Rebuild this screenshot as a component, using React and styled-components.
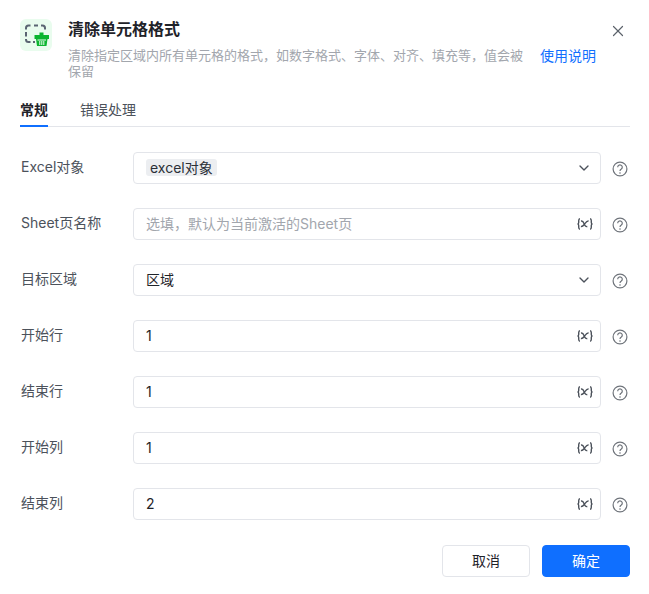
import React from "react";
import styled, { createGlobalStyle } from "styled-components";
import { ChevronDown, X } from "lucide-react";

const GlobalStyle = createGlobalStyle`
  body {
    margin: 0;
    background: #fff;
    font-family: "Inter", "Noto Sans CJK SC", sans-serif;
  }
`;

const Dialog = styled.div`
  width: 649px;
  height: 594px;
  box-sizing: border-box;
  padding: 19px 19px 0 20px;
`;

const Header = styled.div`
  display: flex;
  height: 62px;
`;

const IconBox = styled.div`
  width: 32px;
  height: 32px;
  flex: none;
  margin-right: 16px;
`;

const HeadText = styled.div`
  width: 472px;
  flex: none;
  padding-right: 12px;
  box-sizing: border-box;
`;

const Title = styled.div`
  font-size: 16px;
  font-weight: 700;
  line-height: 20px;
  color: #1f2329;
`;

const Desc = styled.div`
  margin-top: 8px;
  font-size: 13px;
  line-height: 16px;
  color: #a2a6ad;
`;

const HelpLink = styled.a`
  margin-top: 29px;
  font-size: 14px;
  line-height: 16px;
  color: #0f6fff;
  white-space: nowrap;
`;

const CloseButton = styled.button`
  margin: 3px 0 0 13px;
  padding: 0;
  height: 18px;
  border: none;
  background: none;
  color: #5c626b;
  display: flex;
`;

const Tabs = styled.div`
  display: flex;
  gap: 32px;
  width: 610px;
  height: 46px;
  box-sizing: border-box;
  border-bottom: 1px solid #e3e5ea;
`;

const Tab = styled.div`
  font-size: 14px;
  line-height: 20px;
  padding-top: 19px;
  height: 46px;
  box-sizing: border-box;
  font-weight: ${(p) => (p.$active ? 700 : 400)};
  color: ${(p) => (p.$active ? "#1f2329" : "#4c525b")};
  border-bottom: ${(p) => (p.$active ? "2px solid #0f6fff" : "none")};
`;

const Form = styled.div`
  display: flex;
  flex-direction: column;
  gap: 24px;
  margin-top: 25px;
`;

const Row = styled.div`
  display: flex;
  align-items: flex-start;
`;

const Label = styled.div`
  width: 112px;
  margin-left: 1px;
  flex: none;
  font-size: 14px;
  line-height: 30px;
  color: #4c525b;
`;

const Field = styled.div`
  width: 468px;
  height: 32px;
  box-sizing: border-box;
  display: flex;
  align-items: center;
  justify-content: space-between;
  padding: 0 7px 0 12px;
  border: 1px solid #e3e5ea;
  border-radius: 4px;
  font-size: 14px;
  color: #1f2329;
`;

const FieldText = styled.span`
  margin-top: -2px;
  color: ${(p) => (p.$muted ? "#a2a6ad" : "#1f2329")};
`;

const Tag = styled.span`
  background: #eceef1;
  border-radius: 3px;
  padding: 0 4px;
  line-height: 18px;
  color: #2b3038;
`;

const Chevron = styled(ChevronDown)`
  color: #4c525b;
  margin-right: 1px;
`;

const Help = styled.svg`
  width: 16px;
  height: 16px;
  margin: 9px 0 0 11px;
  flex: none;
`;

const Footer = styled.div`
  display: flex;
  justify-content: flex-end;
  gap: 12px;
  width: 610px;
  margin-top: 25px;
`;

const Button = styled.button`
  width: 88px;
  height: 32px;
  padding: 0 0 2px;
  border-radius: 4px;
  font-family: inherit;
  font-size: 14px;
  border: 1px solid ${(p) => (p.$primary ? "#0f6fff" : "#e3e5ea")};
  background: ${(p) => (p.$primary ? "#0f6fff" : "#fff")};
  color: ${(p) => (p.$primary ? "#fff" : "#1f2329")};
`;

const LogoIcon = () => (
  <svg width="32" height="32" viewBox="0 0 32 32">
    <rect width="32" height="32" rx="6" fill="#e9fcee" />
    <path d="M6 10.500V9A2.500 2.500 0 0 1 8.500 6.500H10.500M14 6.500h4M21 6.500h1.500A2.500 2.500 0 0 1 25 9V10.500M6 13v4.500M6 20v.5A2.500 2.500 0 0 0 8.500 23H10.500M13 23h2" fill="none" stroke="#5a6472" strokeWidth="2" />
    <path d="M19.500 13.500h4v2.500h5.500v4H14.500v-4h5z" fill="#0bb52f" />
    <path d="M16 20h11.500l-1 7H17z" fill="#0bb52f" />
    <path d="M17.500 21h8.500" stroke="#e9fcee" strokeWidth="1" />
    <path d="M19.800 22v4M21.800 22v4M23.800 22v4" stroke="#e9fcee" strokeWidth="1" />
  </svg>
);

const VarIcon = () => (
  <svg width="16" height="12" viewBox="0 0 16 12" fill="none" stroke="#4c525b" strokeWidth="1.400">
    <path d="M3 .8c-1.300 0-1.300.8-1.300 2v1.700c0 .9-.4 1.500-1.200 1.500.8 0 1.200.6 1.200 1.500v1.700c0 1.200 0 2 1.300 2" />
    <path d="M13 .8c1.300 0 1.300.8 1.300 2v1.700c0 .9.4 1.500 1.200 1.500-.8 0-1.200.6-1.200 1.500v1.700c0 1.200 0 2-1.300 2" />
    <path d="M4 3c1.600-.3 2.300.4 3 2.600.8 2.200 1.600 3.400 3.300 2.900M11.600 3.100c-1.600-.4-3.200 1.900-4 2.900-.8 1-1.800 2.900-3.700 2.500" />
  </svg>
);

const HelpIcon = () => (
  <Help viewBox="0 0 16 16">
    <circle cx="8" cy="8" r="6.900" fill="none" stroke="#6f747b" strokeWidth="1.200" />
    <path d="M5.700 6.200a2.300 2.300 0 1 1 3.600 1.900c-.8.5-1.300 1-1.300 2" fill="none" stroke="#6f747b" strokeWidth="1.200" />
    <circle cx="8" cy="12" r=".8" fill="#6f747b" />
  </Help>
);

const rows = [
  { label: "Excel对象", tag: "excel对象", select: true },
  { label: "Sheet页名称", placeholder: "选填，默认为当前激活的Sheet页" },
  { label: "目标区域", value: "区域", select: true },
  { label: "开始行", value: "1" },
  { label: "结束行", value: "1" },
  { label: "开始列", value: "1" },
  { label: "结束列", value: "2" },
];

export default function App() {
  return (
    <Dialog>
      <GlobalStyle />
      <Header>
        <IconBox>
          <LogoIcon />
        </IconBox>
        <HeadText>
          <Title>清除单元格格式</Title>
          <Desc>清除指定区域内所有单元格的格式，如数字格式、字体、对齐、填充等，值会被保留</Desc>
        </HeadText>
        <HelpLink>使用说明</HelpLink>
        <CloseButton>
          <X size={18} strokeWidth={1.6} />
        </CloseButton>
      </Header>
      <Tabs>
        <Tab $active>常规</Tab>
        <Tab>错误处理</Tab>
      </Tabs>
      <Form>
        {rows.map((r) => (
          <Row key={r.label}>
            <Label>{r.label}</Label>
            <Field>
              {r.tag && <span><Tag>{r.tag}</Tag></span>}
              {r.placeholder && <FieldText $muted>{r.placeholder}</FieldText>}
              {r.value && <FieldText>{r.value}</FieldText>}
              {r.select ? <Chevron size={16} /> : <VarIcon />}
            </Field>
            <HelpIcon />
          </Row>
        ))}
      </Form>
      <Footer>
        <Button>取消</Button>
        <Button $primary>确定</Button>
      </Footer>
    </Dialog>
  );
}
